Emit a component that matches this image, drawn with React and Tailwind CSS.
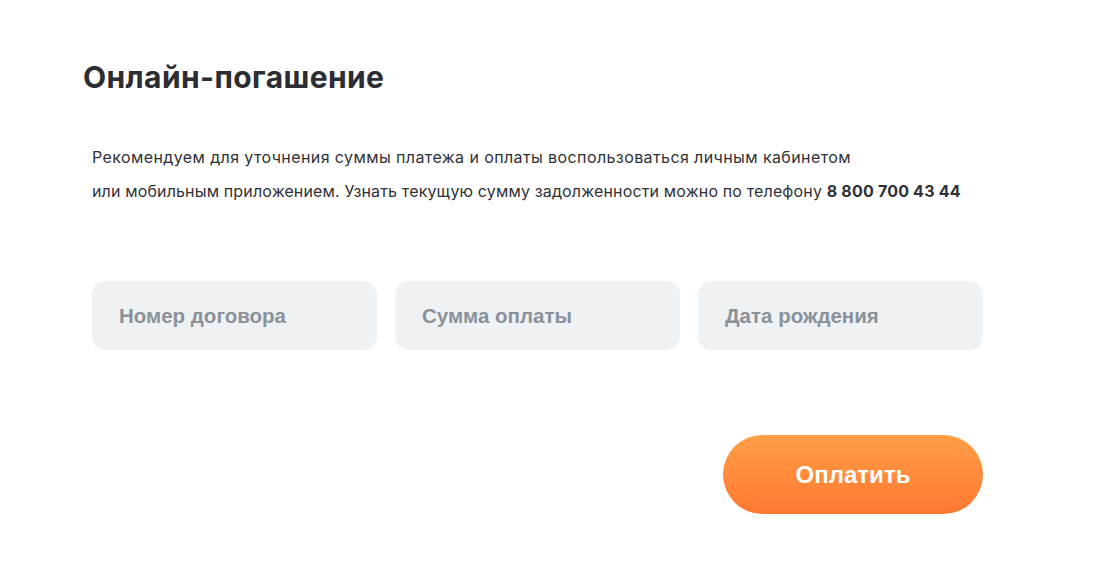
export default function App() {
  return (
    <div className="min-h-screen bg-white text-[#2b2d33]" style={{ fontFamily: 'Inter, "Noto Sans", sans-serif' }}>
      <div className="pl-[83px] pt-[57px] w-[1000px]">
        <h1 className="text-[30px] font-bold leading-[40px] tracking-[0.4px] text-[#2b2d33]">Онлайн-погашение</h1>

        <div className="pl-[9px] mt-[43px] text-[16px] leading-[34px] text-[#2f3137]">
          <p className="tracking-[0.4px]">Рекомендуем для уточнения суммы платежа и оплаты воспользоваться личным кабинетом</p>
          <p className="tracking-[0.15px]">
            или мобильным приложением. Узнать текущую сумму задолженности можно по телефону{' '}
            <span className="font-bold tracking-[0.2px]">8 800 700 43 44</span>
          </p>
        </div>

        <form className="pl-[9px] mt-[73px]" onSubmit={e => e.preventDefault()}>
          <div className="flex gap-[18px]" style={{ fontFamily: '"Liberation Sans", Arial, sans-serif' }}>
            {['Номер договора', 'Сумма оплаты', 'Дата рождения'].map(p => (
              <input
                key={p}
                placeholder={p}
                className="w-[285px] h-[69px] rounded-[14px] bg-[#eff2f5] px-[27px] text-[20.5px] font-bold text-[#2b2d33] placeholder:text-[#8a9199] outline-none"
              />
            ))}
          </div>

          <div className="flex justify-end w-[891px] mt-[85px]">
            <button
              type="submit"
              className="w-[260px] h-[79px] rounded-full bg-linear-to-b from-[#ff9e46] to-[#ff7731] text-white text-[24px] font-bold"
              style={{ fontFamily: '"Liberation Sans", Arial, sans-serif' }}
            >
              Оплатить
            </button>
          </div>
        </form>
      </div>
    </div>
  );
}
